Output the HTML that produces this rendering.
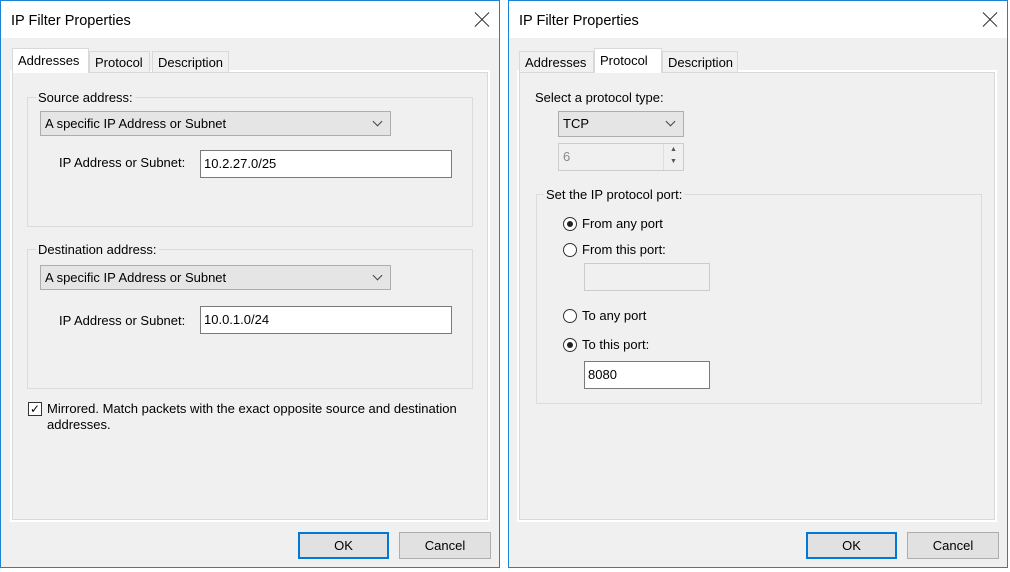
<!DOCTYPE html><html><head><style>
*{box-sizing:border-box;margin:0;padding:0}
body{width:1010px;height:572px;background:#fff;position:relative;overflow:hidden;font-family:"Liberation Sans",sans-serif;font-size:13px;color:#000}
.a{position:absolute}
.dlg{position:absolute;top:0;height:568px;background:#f0f0f0}
.dlg:after{content:"";position:absolute;left:0;top:0;right:0;bottom:0;border:1px solid #1883d7;z-index:9;pointer-events:none}
.title{position:absolute;left:0;top:0;right:0;height:38px;background:#fff;font-size:14.5px;padding:13px 0 0 11px}
.x{position:absolute;right:11px;top:12px;width:14px;height:14px}
.x:before,.x:after{content:"";position:absolute;left:-3px;top:7px;width:20px;height:1px;background:#222;transform:rotate(45deg)}
.x:after{transform:rotate(-45deg)}
.panel{position:absolute;background:#f0f0f0;border:1px solid #d9d9d9;outline:2px solid #fff}
.tab{position:absolute;border:1px solid #d9d9d9;border-bottom:none;background:#f0f0f0;padding:4px 0 0 5px}
.tab.sel{background:#fff;z-index:2}
.grp{position:absolute;border:1px solid #dcdcdc}
.lbl{position:absolute;background:#f0f0f0;padding:0 2px}
.combo{position:absolute;background:#e5e5e5;border:1px solid #adadad;padding:4px 0 0 4px;font-size:13px}
.combo:after{content:"";position:absolute;right:9px;top:6px;width:6px;height:6px;border-right:1px solid #444;border-bottom:1px solid #444;transform:rotate(45deg)}
.inp{position:absolute;background:#fff;border:1px solid #7a7a7a;padding:5px 0 0 3px;font-size:13px}
.btn{position:absolute;background:#e1e1e1;border:1px solid #adadad;text-align:center;padding-top:5px;font-size:13px}
.btn.def{border:2px solid #0078d7;padding-top:4px}
.rad{position:absolute;width:14px;height:14px;border-radius:50%;border:1px solid #333;background:#fff}
.rad.on:after{content:"";position:absolute;left:3px;top:3px;width:6px;height:6px;border-radius:50%;background:#222}
</style></head><body>

<div class="dlg" style="left:0;width:500px">
<div class="title">IP Filter Properties</div><div class="x"></div>
<div class="panel" style="left:12px;top:72px;width:476px;height:448px"></div>
<div class="tab sel" style="left:12px;top:48px;width:77px;height:25px;padding-top:4px">Addresses</div>
<div class="tab" style="left:89px;top:51px;width:61px;height:21px;padding-top:3px">Protocol</div>
<div class="tab" style="left:152px;top:51px;width:77px;height:21px;padding-top:3px">Description</div>
<div class="grp" style="left:27px;top:97px;width:446px;height:130px"></div>
<div class="lbl" style="left:36px;top:90px">Source address:</div>
<div class="combo" style="left:40px;top:111px;width:351px;height:25px">A specific IP Address or Subnet</div>
<div class="a" style="left:59px;top:155px">IP Address or Subnet:</div>
<div class="inp" style="left:200px;top:150px;width:252px;height:28px">10.2.27.0/25</div>
<div class="grp" style="left:27px;top:249px;width:446px;height:140px"></div>
<div class="lbl" style="left:36px;top:242px">Destination address:</div>
<div class="combo" style="left:40px;top:265px;width:351px;height:25px">A specific IP Address or Subnet</div>
<div class="a" style="left:59px;top:313px">IP Address or Subnet:</div>
<div class="inp" style="left:200px;top:306px;width:252px;height:28px">10.0.1.0/24</div>
<div class="a" style="left:28px;top:402px;width:14px;height:14px;border:1px solid #333;background:#fff;font-size:12px;line-height:12px;text-align:center">✓</div>
<div class="a" style="left:47px;top:401px;line-height:16px">Mirrored. Match packets with the exact opposite source and destination<br>addresses.</div>
<div class="btn def" style="left:298px;top:532px;width:91px;height:27px">OK</div>
<div class="btn" style="left:399px;top:532px;width:92px;height:27px">Cancel</div>
</div>

<div class="dlg" style="left:508px;width:500px">
<div class="title">IP Filter Properties</div><div class="x"></div>
<div class="panel" style="left:11px;top:72px;width:476px;height:448px"></div>
<div class="tab" style="left:11px;top:51px;width:75px;height:21px;padding-top:3px">Addresses</div>
<div class="tab sel" style="left:86px;top:48px;width:68px;height:25px;padding-top:4px">Protocol</div>
<div class="tab" style="left:154px;top:51px;width:76px;height:21px;padding-top:3px">Description</div>
<div class="a" style="left:27px;top:90px">Select a protocol type:</div>
<div class="combo" style="left:50px;top:111px;width:126px;height:26px">TCP</div>
<div class="a" style="left:50px;top:143px;width:126px;height:28px;border:1px solid #ccc;background:#f0f0f0;color:#888;padding:5px 0 0 4px;font-size:13px">6
<div class="a" style="right:0;top:0;width:20px;height:26px;border-left:1px solid #ddd;font-size:7px;color:#555;text-align:center;line-height:12px">▲<br>▼</div></div>
<div class="grp" style="left:28px;top:194px;width:446px;height:210px"></div>
<div class="lbl" style="left:36px;top:187px">Set the IP protocol port:</div>
<div class="rad on" style="left:55px;top:217px"></div><div class="a" style="left:74px;top:216px">From any port</div>
<div class="rad" style="left:55px;top:243px"></div><div class="a" style="left:74px;top:242px">From this port:</div>
<div class="a" style="left:76px;top:263px;width:126px;height:28px;border:1px solid #ccc;background:#f0f0f0"></div>
<div class="rad" style="left:55px;top:309px"></div><div class="a" style="left:74px;top:308px">To any port</div>
<div class="rad on" style="left:55px;top:338px"></div><div class="a" style="left:74px;top:337px">To this port:</div>
<div class="inp" style="left:76px;top:361px;width:126px;height:28px">8080</div>
<div class="btn def" style="left:298px;top:532px;width:91px;height:27px">OK</div>
<div class="btn" style="left:399px;top:532px;width:92px;height:27px">Cancel</div>
</div>
</body></html>
